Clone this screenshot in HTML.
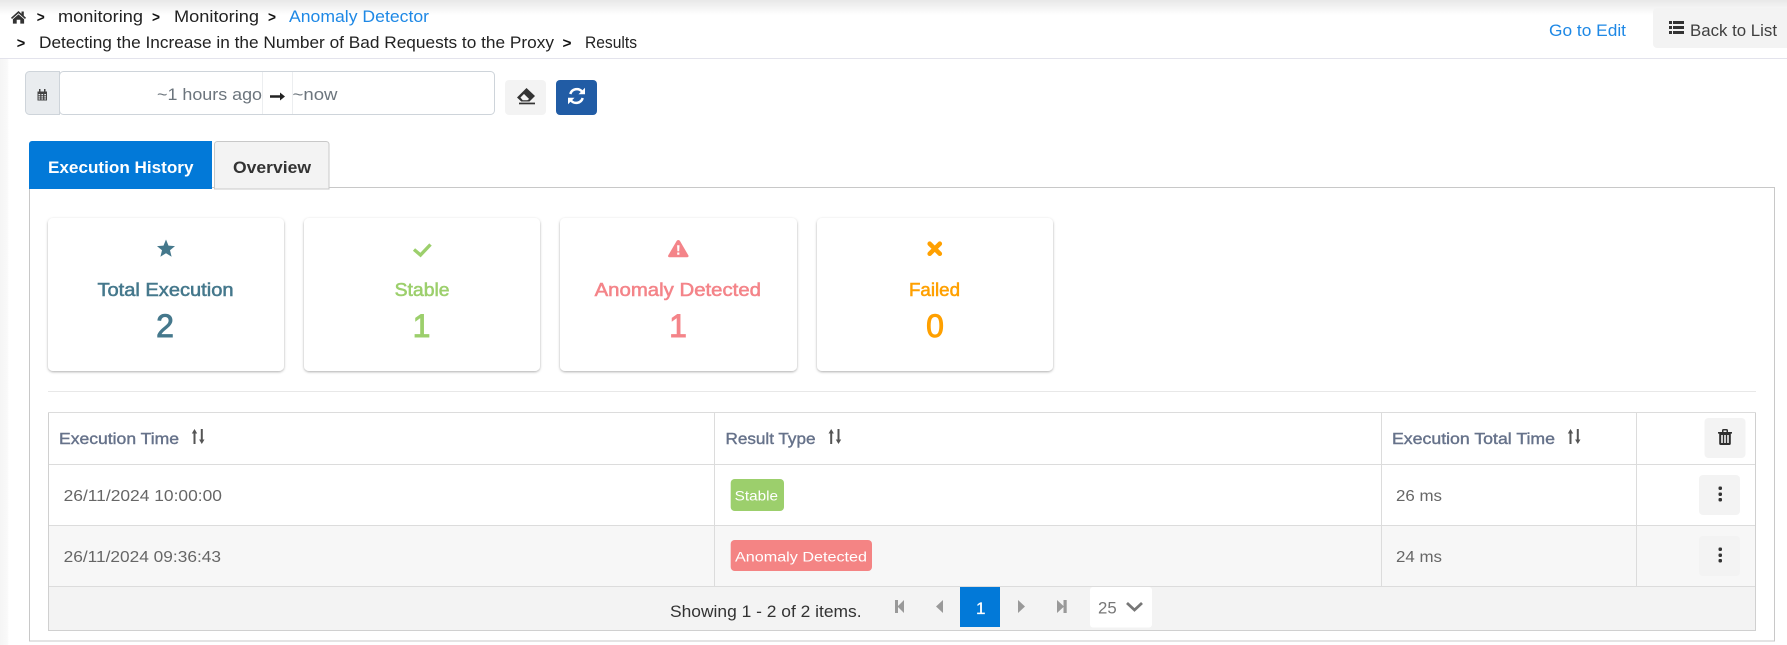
<!DOCTYPE html>
<html lang="en">
<head>
<meta charset="utf-8">
<title>Results</title>
<style>
html,body{margin:0;padding:0;background:#fff;width:1787px;height:645px;overflow:hidden}
svg{display:block}
text{font-family:"Liberation Sans",Arial,sans-serif;white-space:pre}
.t{font-size:16.5px;fill:#222}
.sep{font-size:15px;font-weight:bold;fill:#111}
.th{font-size:16px;fill:#66728a;stroke:#66728a;stroke-width:.4}
.td{font-size:16px;fill:#666}
.title{font-size:18px;stroke-width:.55}
.num{font-size:32px;stroke-width:.9;text-anchor:middle}
.b{font-size:14px;fill:#fff}
</style>
</head>
<body>
<svg xmlns="http://www.w3.org/2000/svg" width="1787" height="645" viewBox="0 0 1787 645">
<defs>
<linearGradient id="topg" x1="0" y1="0" x2="0" y2="1"><stop offset="0" stop-color="#e8e8e8"/><stop offset="1" stop-color="#fff"/></linearGradient>
<linearGradient id="leftg" x1="0" y1="0" x2="1" y2="0"><stop offset="0" stop-color="#f5f5f5"/><stop offset=".8" stop-color="#f9f9f9"/><stop offset="1" stop-color="#fff"/></linearGradient>
<filter id="cs" x="-5%" y="-5%" width="110%" height="112%"><feDropShadow dx="0" dy="1" stdDeviation="1.4" flood-color="#000" flood-opacity=".32"/></filter>
</defs>

<!-- header -->
<rect width="1787" height="15" fill="url(#topg)"/>
<rect x="0" y="59" width="9" height="586" fill="url(#leftg)"/>
<rect x="0" y="58" width="1787" height="1" fill="#e3e3ec"/>

<path d="M11 17.800 18.500 11 21.500 13.700V11.500H23.800V15.800L26 17.800 25 19 18.500 13.300 12 19ZM12.900 19.300 18.500 14.400 24.100 19.300V23.600H20.300V19.800H16.700V23.600H12.900Z" fill="#333"/>
<text class="sep" x="36.700" y="22" textLength="8" lengthAdjust="spacingAndGlyphs">&gt;</text>
<text class="t" x="58" y="22" textLength="85" lengthAdjust="spacingAndGlyphs">monitoring</text>
<text class="sep" x="152" y="22" textLength="8" lengthAdjust="spacingAndGlyphs">&gt;</text>
<text class="t" x="174" y="22" textLength="85" lengthAdjust="spacingAndGlyphs">Monitoring</text>
<text class="sep" x="268" y="22" textLength="8" lengthAdjust="spacingAndGlyphs">&gt;</text>
<text class="t" x="289" y="22" textLength="140" lengthAdjust="spacingAndGlyphs" style="fill:#1e88e5">Anomaly Detector</text>
<text class="sep" x="16.700" y="48" textLength="8.500" lengthAdjust="spacingAndGlyphs">&gt;</text>
<text class="t" x="39" y="48" textLength="515" lengthAdjust="spacingAndGlyphs">Detecting the Increase in the Number of Bad Requests to the Proxy</text>
<text class="sep" x="562.500" y="48" textLength="9" lengthAdjust="spacingAndGlyphs">&gt;</text>
<text class="t" x="585" y="48" textLength="52" lengthAdjust="spacingAndGlyphs">Results</text>

<text class="t" x="1549" y="36" textLength="77" lengthAdjust="spacingAndGlyphs" style="fill:#1e88e5">Go to Edit</text>
<path d="M1657 8H1787V48H1657A4 4 0 0 1 1653 44V12A4 4 0 0 1 1657 8Z" fill="#f3f3f3"/>
<path d="M1669 21h3v3h-3zM1673 21h11v3h-11zM1669 26h3v3h-3zM1673 26h11v3h-11zM1669 31h3v3h-3zM1673 31h11v3h-11z" fill="#333"/>
<text class="t" x="1690" y="36" textLength="87" lengthAdjust="spacingAndGlyphs" style="fill:#3f3f3f">Back to List</text>

<!-- date range -->
<path d="M29.500 71.500H59.500V114.500H29.500A4 4 0 0 1 25.500 110.500V75.500A4 4 0 0 1 29.500 71.500Z" fill="#e9ecef" stroke="#ced4da"/>
<path d="M37.500 91.500h9.500v9h-9.500z" fill="#444"/>
<path d="M39 89h1.500v3H39zM44 89h1.500v3H44z" fill="#444"/>
<path d="M38.500 94h1.700v1.300h-1.700zM41.400 94h1.700v1.300h-1.700zM44.300 94h1.700v1.300h-1.700zM38.500 96.200h1.700v1.300h-1.700zM41.400 96.200h1.700v1.300h-1.700zM44.300 96.200h1.700v1.300h-1.700zM38.500 98.400h1.700v1.100h-1.700zM41.400 98.400h1.700v1.100h-1.700zM44.300 98.400h1.700v1.100h-1.700z" fill="#e9ecef"/>
<rect x="59.500" y="71.500" width="435" height="43" rx="4" fill="#fff" stroke="#ced4da"/>
<path d="M262.500 72V114M292.500 72V114" stroke="#eceef0"/>
<text class="td" x="157" y="100" textLength="105" lengthAdjust="spacingAndGlyphs" style="font-size:17px;fill:#6c757d">~1 hours ago</text>
<path d="M270 95.200H280V92.500L285 96.500 280 100.500V97.800H270Z" fill="#222"/>
<text class="td" x="292.500" y="100" textLength="45" lengthAdjust="spacingAndGlyphs" style="font-size:17px;fill:#6c757d">~now</text>

<rect x="505" y="80" width="41" height="35" rx="4" fill="#f3f3f3"/>
<path d="M517 97.500 526.500 88 535 96 529.500 101.500H521.300Z" fill="#333"/>
<path d="M520 97.500 524 93.500 529.600 99 527.600 100.500H522.500Z" fill="#f3f3f3" stroke="#333" stroke-width=".6"/>
<rect x="519" y="102.600" width="16" height="1.700" fill="#333"/>
<rect x="556" y="80" width="41" height="35" rx="4" fill="#215ca5"/>
<g fill="none" stroke="#fff" stroke-width="2.500">
<path d="M570.300 94A6.800 6.800 0 0 1 582 91.500"/>
<path d="M582.700 98A6.800 6.800 0 0 1 571 100.500"/>
</g>
<path d="M585 87.800V94.300H578.500ZM568 104.200V97.700H574.500Z" fill="#fff"/>

<!-- tabs -->
<rect x="29.500" y="187.500" width="1745" height="453.500" fill="#fff" stroke="#c8c8c8"/>
<path d="M32 141H212V189H29V144A3 3 0 0 1 32 141Z" fill="#0279d8"/>
<path d="M214.500 189V144A3 3 0 0 1 217.500 141.500H326A3 3 0 0 1 329 144V189Z" fill="#f3f3f3" stroke="#c8c8c8"/>
<text x="48" y="173" textLength="145.500" lengthAdjust="spacingAndGlyphs" style="font-size:17px;font-weight:bold;fill:#fff">Execution History</text>
<text x="233" y="173" textLength="78" lengthAdjust="spacingAndGlyphs" style="font-size:17px;font-weight:bold;fill:#333">Overview</text>

<!-- cards -->
<g fill="#fff" filter="url(#cs)">
<rect x="48" y="218" width="236" height="153" rx="5"/>
<rect x="304" y="218" width="236" height="153" rx="5"/>
<rect x="560" y="218" width="237" height="153" rx="5"/>
<rect x="817" y="218" width="236" height="153" rx="5"/>
</g>
<polygon points="166,239.500 168.500,245.600 175,246.100 170,250.300 171.600,256.700 166,253.200 160.400,256.700 162,250.300 157,246.100 163.500,245.600" fill="#45788c"/>
<text class="title" x="97.500" y="296" textLength="136" lengthAdjust="spacingAndGlyphs" style="fill:#45788c;stroke:#45788c">Total Execution</text>
<text class="num" x="165" y="337" style="fill:#45788c;stroke:#45788c">2</text>

<polyline points="414,249.500 420.500,255 430.500,244.500" fill="none" stroke="#9ccf6c" stroke-width="3.400"/>
<text class="title" x="394.600" y="296" textLength="55" lengthAdjust="spacingAndGlyphs" style="fill:#9ccf6c;stroke:#9ccf6c">Stable</text>
<text class="num" x="421.500" y="337" style="fill:#9ccf6c;stroke:#9ccf6c">1</text>

<path d="M678.300 240C679 240 679.600 240.400 680 241L688.300 255.300C689 256.500 688.300 257.200 687.200 257.200H669.400C668.300 257.200 667.600 256.500 668.300 255.300L676.600 241C677 240.400 677.600 240 678.300 240Z" fill="#f48489"/>
<path d="M677.100 245.300H679.500L679.200 251.200H677.400ZM677.200 252.500H679.400V254.700H677.200Z" fill="#fff"/>
<text class="title" x="594.600" y="296" textLength="166.400" lengthAdjust="spacingAndGlyphs" style="fill:#f48489;stroke:#f48489">Anomaly Detected</text>
<text class="num" x="678" y="337" style="fill:#f48489;stroke:#f48489">1</text>

<path d="M929.700 243.700 939.800 253.700M939.800 243.700 929.700 253.700" stroke="#ffa000" stroke-width="4.600" stroke-linecap="round"/>
<text class="title" x="909" y="296" textLength="51" lengthAdjust="spacingAndGlyphs" style="fill:#ffa000;stroke:#ffa000">Failed</text>
<text class="num" x="935" y="337" style="fill:#ffa000;stroke:#ffa000">0</text>

<rect x="48" y="391" width="1708" height="1" fill="#e8e8e8"/>

<!-- table -->
<rect x="48.500" y="412.500" width="1707" height="217.500" fill="#fff"/>
<rect x="48.500" y="525.500" width="1707" height="61" fill="#f7f7f7"/>
<rect x="48.500" y="586.500" width="1707" height="44" fill="#f3f3f3"/>
<g stroke="#dcdcdc" fill="none">
<path d="M48.500 412.500H1755.500M48.500 464.500H1755.500M48.500 525.500H1755.500M48.500 586.500H1755.500"/>
<path d="M714.500 412.500V586.500M1381.500 412.500V586.500M1636.500 412.500V586.500"/>
<path d="M48.500 412.500V630.500H1755.500V412.500" stroke="#d0d0d0"/>
</g>

<text class="th" x="59" y="444" textLength="120" lengthAdjust="spacingAndGlyphs">Execution Time</text>
<text class="th" x="725.500" y="444" textLength="90" lengthAdjust="spacingAndGlyphs">Result Type</text>
<text class="th" x="1392" y="444" textLength="163" lengthAdjust="spacingAndGlyphs">Execution Total Time</text>
<g fill="#555">
<path d="M194.500 429 197.200 433.500H195.500V444H193.500V433.500H191.800ZM200.800 429H202.800V439.500H204.500L201.800 444 199.100 439.500H200.800Z"/>
<path d="M831.200 429 833.900 433.500H832.200V444H830.200V433.500H828.500ZM837.500 429H839.500V439.500H841.200L838.500 444 835.800 439.500H837.500Z"/>
<path d="M1570.500 429 1573.200 433.500H1571.500V444H1569.500V433.500H1567.800ZM1576.800 429H1578.800V439.500H1580.500L1577.800 444 1575.100 439.500H1576.800Z"/>
</g>

<rect x="1704.500" y="418" width="41" height="40" rx="4" fill="#f3f3f3"/>
<path d="M1718 432H1732V433.600H1730.800V443.500Q1730.800 445 1729.300 445H1720.700Q1719.200 445 1719.200 443.500V433.600H1718ZM1722 432V430.500Q1722 429 1723.500 429H1726.500Q1728 429 1728 430.500V432H1726.500V430.500H1723.500V432Z" fill="#2f2f2f"/>
<path d="M1721.200 435H1722.800V443H1721.200ZM1724.200 435H1725.800V443H1724.200ZM1727.200 435H1728.800V443H1727.200Z" fill="#f3f3f3"/>

<text class="td" x="63.600" y="501" textLength="158.400" lengthAdjust="spacingAndGlyphs">26/11/2024 10:00:00</text>
<rect x="730.700" y="479" width="53.300" height="32" rx="4" fill="#9ccf6c"/>
<text class="b" x="734.700" y="500.300" textLength="43.300" lengthAdjust="spacingAndGlyphs">Stable</text>
<text class="td" x="1396" y="501" textLength="46" lengthAdjust="spacingAndGlyphs">26 ms</text>
<rect x="1699" y="475" width="41" height="40" rx="4" fill="#f3f3f3"/>
<g fill="#333"><rect x="1718.500" y="486.500" width="3.500" height="3.500" rx="1.200"/><rect x="1718.500" y="492.500" width="3.500" height="3.500" rx="1.200"/><rect x="1718.500" y="498" width="3.500" height="3.500" rx="1.200"/></g>

<text class="td" x="63.600" y="562" textLength="157.400" lengthAdjust="spacingAndGlyphs">26/11/2024 09:36:43</text>
<rect x="730.700" y="540" width="141.300" height="31" rx="4" fill="#f48484"/>
<text class="b" x="735" y="561.500" textLength="132" lengthAdjust="spacingAndGlyphs">Anomaly Detected</text>
<text class="td" x="1396" y="562" textLength="46" lengthAdjust="spacingAndGlyphs">24 ms</text>
<rect x="1699" y="536" width="41" height="40" rx="4" fill="#f3f3f3"/>
<g fill="#333"><rect x="1718.500" y="547.500" width="3.500" height="3.500" rx="1.200"/><rect x="1718.500" y="553.500" width="3.500" height="3.500" rx="1.200"/><rect x="1718.500" y="559" width="3.500" height="3.500" rx="1.200"/></g>

<!-- pager -->
<text x="670" y="617" textLength="191.600" lengthAdjust="spacingAndGlyphs" style="font-size:16.500px;fill:#333">Showing 1 - 2 of 2 items.</text>
<path d="M895 600H898V606L904 600V613L898 607V613H895ZM943 600V613L936 606.500ZM1018 600 1025 606.500 1018 613ZM1057 600 1063.500 606V600H1066.700V613H1063.500V607L1057 613Z" fill="#999"/>
<rect x="960" y="587" width="40" height="40" fill="#0279d8"/>
<text x="980.700" y="614" text-anchor="middle" style="font-size:17px;fill:#fff;stroke:#fff;stroke-width:.3">1</text>
<rect x="1090" y="587" width="62" height="40.500" rx="3" fill="#fff"/>
<text x="1098" y="613.500" textLength="18.700" lengthAdjust="spacingAndGlyphs" style="font-size:17px;fill:#777">25</text>
<polyline points="1127,603 1134.500,610 1142,603" fill="none" stroke="#777" stroke-width="2.800"/>
</svg>
</body>
</html>
